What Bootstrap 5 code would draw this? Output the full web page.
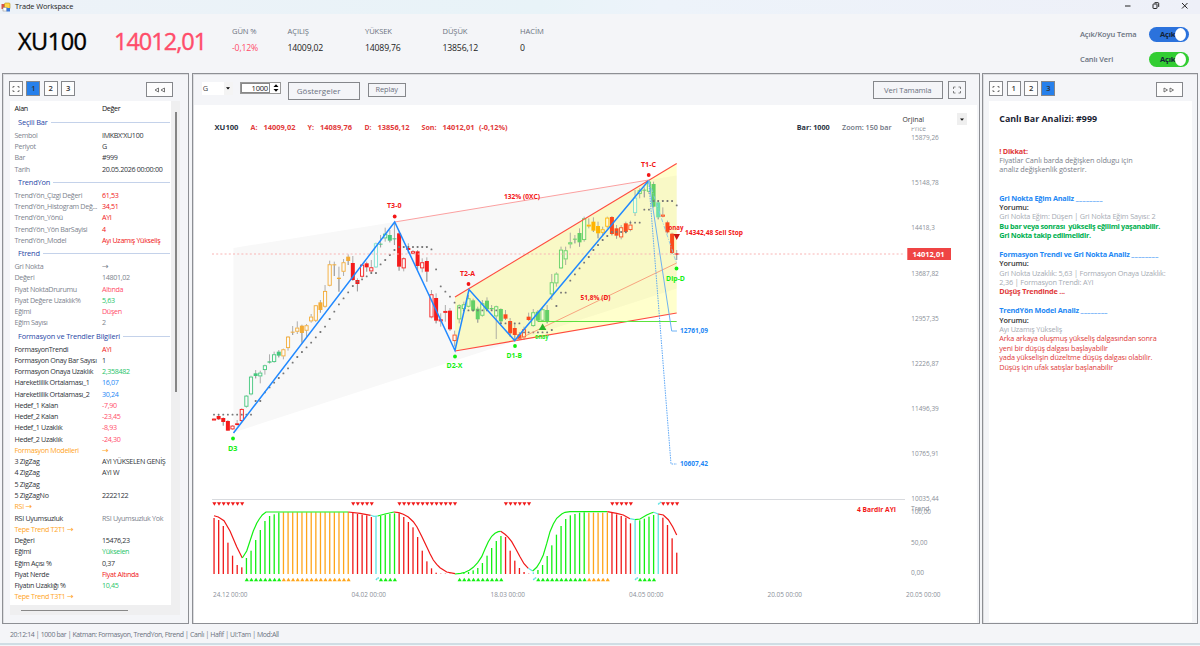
<!DOCTYPE html>
<html lang="tr">
<head>
<meta charset="utf-8">
<title>Trade Workspace</title>
<link rel="stylesheet" href="https://cdn.jsdelivr.net/npm/bootstrap@5.3.0/dist/css/bootstrap.min.css">
<style>
:root{--seg:"Open Sans","Noto Sans",sans-serif}
body{width:1200px;height:646px;overflow:hidden;background:#f4f5f8;font-family:var(--seg);font-size:7.4px;line-height:1;color:#222}
.titlebar{height:14px;background:linear-gradient(90deg,#edf2f8,#e8f3f8 45%,#edf3fa 55%,#eef0f8);padding-left:1px;color:#222;letter-spacing:-.1px}
.topbar{height:59px}
.sym{font-size:23.5px;font-weight:500;letter-spacing:-.5px;color:#000;margin-left:18px;width:96px;line-height:28px;padding-top:13px;-webkit-text-stroke:.4px}
.px{font-size:23.5px;font-weight:500;letter-spacing:-1px;color:#ff4d6a;width:118px;line-height:28px;padding-top:13px;-webkit-text-stroke:.4px}
.stat{padding-top:12px}
.stat b,.stat i{display:block;font-weight:400;font-style:normal;white-space:nowrap}
.stat b{color:#6b7280;font-size:7.6px;line-height:10px;letter-spacing:-.1px}
.stat i{font-size:8.7px;line-height:12px;margin-top:6px;letter-spacing:-.18px}
.tog{width:40px;height:15px;border-radius:8px;padding:0 1px 0 11px;font-weight:700;font-size:7.5px;color:#132238;letter-spacing:-.2px}
.tog span{width:11px;height:13px;border-radius:50%;background:#fff;margin-left:0;flex:none}
.blue{background:#2b72dc}.green{background:#32cd32}
.toglabel{width:69px;font-weight:600;color:#6a7280;font-size:7.5px;letter-spacing:-.12px}
.pane{border:1px solid #8d8f94;box-shadow:inset 1px 1px 0 #dcdde0;height:551px;background:#f4f5f8}
.sq{width:14px;height:15px;border:1px solid #85878b;background:#fdfdfd;color:#333;font-size:7.6px;font-weight:600}
.sq.on{background:#2680eb}
.arr{width:27px;height:15px;border:1px solid #85878b;background:#fdfdfd}
.btnx{border:1px solid #85878b;background:#f4f5f8;color:#6b7280}
.lst{width:161px;height:504px;background:#fff;overflow:hidden}
.lst .rw{height:11.27px;line-height:11.27px;padding-left:4.5px;white-space:nowrap;letter-spacing:-.32px;font-size:7.15px}
.lst .rw span:first-child{width:87.5px;flex:none}
.lst .hd{height:14px;line-height:15px;color:#111}
.lst .gp{height:14.9px;line-height:15px;font-size:7.4px;font-weight:500;padding-left:8px;color:#2746a6;white-space:nowrap;letter-spacing:-.15px}
.gp::after{content:"";flex:1;height:1px;background:#c4d2ea;margin:0 1px 0 3px;align-self:center}
.rw em{font:400 8px/11px "DejaVu Sans",sans-serif}
.g{color:#7d838e}.k{color:#30343a}.r{color:#f01515}.p{color:#ff4d6a}.n{color:#1fc46a}.b{color:#1e88f5}.o{color:#ffa51e}
.ana{background:#fff;width:203px;height:521px;padding:13px 0 0 10px;white-space:pre;line-height:9.4px;font-size:7.3px;letter-spacing:-.08px}
.ana h1{font-size:8.9px;font-weight:700;line-height:10px;margin:0 0 22.6px;color:#1b2433;letter-spacing:0}
.ana div{height:9.4px}
.ana .hb{color:#1e88f5;font-weight:700;letter-spacing:-.2px}.ana .gb{color:#00b050;font-weight:700;letter-spacing:-.29px}.ana .rb{color:#e03a3a;font-weight:700;letter-spacing:-.2px}
.ana .hb u{text-decoration:none;letter-spacing:.4px}
.ana .lg{color:#a6abb3;letter-spacing:-.16px}.ana .rd{color:#e03a3a;letter-spacing:-.14px}.ana .yo{color:#333;font-weight:600;letter-spacing:-.1px}.ana .dk{color:#7b818b}
.status{height:21px;padding:4px 0 0 10px;color:#6b7280;font-size:6.9px;letter-spacing:-.36px;border-bottom:2px solid #cfdde4}
svg text{font-family:var(--seg)}
</style>
</head>
<body>
<div class="titlebar d-flex align-items-center">
  <svg width="10" height="10" viewBox="0 0 10 10"><rect x=".5" y="2" width="5" height="5" fill="#d9534a"/><rect x="3.5" y="1" width="5.5" height="6" rx="1" fill="#ffd54a" stroke="#b9901c" stroke-width=".6"/><rect x="2" y="5.5" width="4" height="3.5" fill="#fff" stroke="#888" stroke-width=".5"/><rect x="5.5" y="6" width="3.5" height="3.5" fill="#3b78d8"/></svg>
  <span style="margin-left:4px">Trade Workspace</span>
  <svg class="ms-auto" width="80" height="14" viewBox="1120 0 80 14" fill="none" stroke="#222" stroke-width="1"><path d="M1125 6h5.500M1182 3l5.500 5.500m0-5.500l-5.500 5.500"/><rect x="1153" y="4" width="4" height="4.500" rx=".5"/><path d="M1154.500 3.200q0-.5.5-.5h3q.7 0 .7.7v3.500"/></svg>
</div>
<header class="topbar d-flex">
  <div class="sym">XU100</div>
  <div class="px-price px">14012,01</div>
  <div class="d-flex stat">
    <div style="width:55.500px"><b>GÜN %</b><i style="color:#ff4d6a">-0,12%</i></div>
    <div style="width:77.500px"><b>AÇILIŞ</b><i>14009,02</i></div>
    <div style="width:77.500px"><b>YÜKSEK</b><i>14089,76</i></div>
    <div style="width:77.500px"><b>DÜŞÜK</b><i>13856,12</i></div>
    <div><b>HACİM</b><i>0</i></div>
  </div>
  <div class="ms-auto d-flex flex-column" style="padding:13px 11px 0 0;gap:10px">
    <div class="d-flex align-items-center"><span class="toglabel">Açık/Koyu Tema</span><div class="tog blue d-flex align-items-center">Açık<span></span></div></div>
    <div class="d-flex align-items-center"><span class="toglabel">Canlı Veri</span><div class="tog green d-flex align-items-center">Açık<span></span></div></div>
  </div>
</header>
<main class="d-flex" style="padding:0 2px;gap:2.500px">
  <section class="pane" style="width:187.500px;padding:7px 0 0 6px">
    <div class="d-flex" style="gap:3.400px;height:20px">
      <div class="sq d-flex align-items-center justify-content-center"><svg width="8" height="8" viewBox="0 0 8 8" fill="none" stroke="#555" stroke-width=".8"><path d="M1 3V1.500h1.500M5.500 1.500H7V3M1 5v1.500h1.500M5.500 6.500H7V5"/></svg></div>
      <div class="sq on d-flex align-items-center justify-content-center">1</div>
      <div class="sq d-flex align-items-center justify-content-center">2</div>
      <div class="sq d-flex align-items-center justify-content-center">3</div>
      <div class="arr d-flex align-items-center justify-content-center" style="margin-left:67.500px;margin-top:1px"><svg width="12" height="6" viewBox="0 0 12 6" fill="none" stroke="#555" stroke-width=".8"><path d="M4.500 1v4L1 3zM10.500 1v4L7 3z"/></svg></div>
    </div>
    <div class="d-flex" style="background:#efeff0;width:170px;height:514px;margin-left:1px">
      <div style="width:161px">
        <div class="lst" id="lst"></div>
        <div style="margin:4.500px 0 0 10.500px;width:107px;height:1.500px;background:#888"></div>
      </div>
      <div style="margin:11px 0 0 4px;width:1.500px;height:280px;background:#858585"></div>
    </div>
  </section>
  <section class="pane" style="width:788px;padding:0 2px 0 1px">
    <div class="d-flex" style="height:31px;padding:7px 11px 0 8px">
      <div class="d-flex bg-white" style="width:31px;height:13px;margin-top:1px"><span class="flex-fill" style="padding:3px 0 0 1px;color:#444">G</span><span class="d-flex align-items-center justify-content-center" style="width:9px;background:#f4f4f4"><svg width="4" height="3"><path d="M0 .3h4L2 2.500z"/></svg></span></div>
      <div class="d-flex bg-white" style="width:41px;height:12px;border:1px solid #999;margin:1px 0 0 7px"><span class="flex-fill text-end" style="border:1px solid #888;padding:1px 1px 0 0;margin-right:2px;font-size:7.600px;line-height:7px;letter-spacing:-.3px">1000</span><svg width="8" height="10"><path d="M1.500 4L4 1.200 6.500 4zM1.500 6L4 8.800 6.500 6z"/></svg></div>
      <div class="btnx" style="width:72px;height:18px;margin:1px 0 0 7px;padding:4px 0 0 8px;font-size:8px">Göstergeler</div>
      <div class="btnx text-center" style="width:38px;height:14px;margin:2px 0 0 8px;padding-top:2px;font-size:7.400px;letter-spacing:-.1px">Replay</div>
      <div class="btnx text-center" style="width:70px;height:18px;margin:0 0 0 auto;padding-top:5px;font-size:7.700px;letter-spacing:-.15px">Veri Tamamla</div>
      <div class="btnx d-flex align-items-center justify-content-center" style="width:18px;height:18px;margin-left:5px"><svg width="8" height="8" viewBox="0 0 8 8" fill="none" stroke="#666" stroke-width=".8"><path d="M.5 3V1H2.500M5.500 1H7.500V3M.5 5v2H2.500M5.500 7H7.500V5"/></svg></div>
    </div>
    <svg id="chart" class="d-block bg-white" width="783" height="518" viewBox="194 105 783 518"></svg>
  </section>
  <section class="pane" style="width:216px;padding:7px 0 0 6px">
    <div class="d-flex" style="gap:3.400px;height:20px">
      <div class="sq d-flex align-items-center justify-content-center"><svg width="8" height="8" viewBox="0 0 8 8" fill="none" stroke="#555" stroke-width=".8"><path d="M1 3V1.500h1.500M5.500 1.500H7V3M1 5v1.500h1.500M5.500 6.500H7V5"/></svg></div>
      <div class="sq d-flex align-items-center justify-content-center">1</div>
      <div class="sq d-flex align-items-center justify-content-center">2</div>
      <div class="sq on d-flex align-items-center justify-content-center">3</div>
      <div class="arr d-flex align-items-center justify-content-center" style="margin-left:97px;margin-top:1px"><svg width="12" height="6" viewBox="0 0 12 6" fill="none" stroke="#555" stroke-width=".8"><path d="M1 1v4l3.500-2zM7 1v4l3.500-2z"/></svg></div>
    </div>
    <div class="ana"><h1>Canlı Bar Analizi: #999</h1><div class="rb">! Dikkat:</div><div class="dk">Fiyatlar Canlı barda değişken oldugu için</div><div class="dk">analiz değişkenlik gösterir.</div><div></div><div></div><div class="hb">Gri Nokta Eğim Analiz <u>________</u></div><div class="yo">Yorumu:</div><div class="lg">Gri Nokta Eğim: Düşen | Gri Nokta Eğim Sayısı: 2</div><div class="gb">Bu bar veya sonrası  yükseliş eğilimi yaşanabilir.</div><div class="gb">Gri Nokta takip edilmelidir.</div><div></div><div class="hb">Formasyon Trendi ve Gri Nokta Analiz <u>________</u></div><div class="yo">Yorumu:</div><div class="lg">Gri Nokta Uzaklık: 5,63 | Formasyon Onaya Uzaklık:</div><div class="lg">2,36 | Formasyon Trendi: AYI</div><div class="rb">Düşüş Trendinde ...</div><div></div><div class="hb">TrendYön Model Analiz <u>________</u></div><div class="yo">Yorumu:</div><div class="lg">Ayı Uzamış Yükseliş</div><div class="rd">Arka arkaya oluşmuş yükseliş dalgasından sonra</div><div class="rd">yeni bir düşüş dalgası başlayabilir</div><div class="rd">yada yükselişin düzeltme düşüş dalgası olabilir.</div><div class="rd">Düşüş için ufak satışlar başlanabilir</div></div>
  </section>
</main>
<footer class="status d-flex align-items-center">20:12:14 | 1000 bar | Katman: Formasyon, TrendYon, Ftrend | Canlı | Hafif | UI:Tam | Mod:All</footer>
<script>
// Property list: "#" starts a group, otherwise name|name colour|value|value colour
const rows=`#Seçili Bar
Sembol|g|IMKBX'XU100|k
Periyot|g|G|k
Bar|g|#999|k
Tarih|g|20.05.2026 00:00:00|k
#TrendYon
TrendYön_Çizgi Değeri|g|61,53|r
TrendYön_Histogram Değ...|g|34,51|r
TrendYön_Yönü|g|AYI|r
TrendYön_Yön BarSayisi|g|4|r
TrendYön_Model|g|Ayı Uzamış Yükseliş|r
#Ftrend
Gri Nokta|g|→|g
Değeri|g|14801,02|g
Fiyat NoktaDrurumu|g|Altında|p
Fiyat Değere Uzaklık%|g|5,63|n
Eğimi|g|Düşen|p
Eğim Sayısı|g|2|g
#Formasyon ve Trendler Bilgileri
FormasyonTrendi|k|AYI|r
Formasyon Onay Bar Sayısı|k|1|k
Formasyon Onaya Uzaklık|k|2,358482|n
Hareketlilik Ortalaması_1|k|16,07|b
Hareketlilik Ortalaması_2|k|30,24|b
Hedef_1 Kalan|k|-7,90|p
Hedef_2 Kalan|k|-23,45|p
Hedef_1 Uzaklık|k|-8,93|p
Hedef_2 Uzaklık|k|-24,30|p
Formasyon Modelleri|o|→|o
3 ZigZag|k|AYI YÜKSELEN GENİŞ|k
4 ZigZag|k|AYI W|k
5 ZigZag|k||k
5 ZigZagNo|k|2222122|k
RSI →|o||k
RSI Uyumsuzluk|k|RSI Uyumsuzluk Yok|g
Tepe Trend T2T1 →|o||k
Değeri|k|15476,23|k
Eğimi|k|Yükselen|n
Eğim Açısı %|k|0,37|k
Fiyat Nerde|k|Fiyat Altında|r
Fiyatın Uzaklığı %|k|10,45|n
Tepe Trend T3T1 →|o||k`.split('\n');
document.getElementById('lst').innerHTML='<div class="rw hd d-flex"><span>Alan</span><span>Değer</span></div>'+rows.map(r=>{
  if(r[0]=='#')return `<div class="gp d-flex">${r.slice(1)}</div>`;
  const c=r.replace('→','<em>→</em>').split('|');return `<div class="rw d-flex"><span class="${c[1]}">${c[0]}</span><span class="${c[3]}">${c[2]}</span></div>`}).join('');

let s='';const X=i=>214+4.627*i;
const line=(p,c,w=1,x='')=>s+=`<polyline points="${p}" fill="none" stroke="${c}" stroke-width="${w}" ${x}/>`;
const txt=(x,y,t,w,c='#8a8f98',z=7,b=400)=>s+=`<text x="${x}" y="${y}" ${w?`textLength="${w}" lengthAdjust="spacingAndGlyphs"`:''} fill="${c}" font-size="${z}" font-weight="${b}">${t}</text>`;
// shaded regions
s+='<path d="M233.500 248L394.700 222 648.700 180 676.700 175.500V288.500L233.500 432.500z" fill="#f8f8f8"/>';
s+='<path d="M455 297L676.700 163.500V313L455 351z" fill="#ff0" fill-opacity=".2"/>';
// candles: index, wick top, wick bottom, body top, body bottom, colour, filled
const R='#f51b1b',G='#44c77d',O='#f3ab35',C='#7fe3d2',L='#62d066',T='#fb4a1c';
const candles=[[6,310,[
[0,324,330,326,329,R,0],[1,315,330,318,328,R,1],[2,322,347,324,336,R,1],[3,330,362,333,362,R,1],[4,345,360,347,358,R,0],[5,330,346,340,345,R,1],[6,295,338,297,333,R,0],[7,255,293,257,290,G,0],[8,197,256,200,253,G,0],[9,180,205,190,198,G,1],[10,182,220,188,199,G,0],[11,164,194,166,180,G,0],[12,133,160,154,158,G,1],[13,125,158,133,156,G,0],[14,120,142,125,137,G,1],[15,116,148,118,139,O,0],[16,78,122,80,114,O,0],[17,48,75,65,68,O,1],[18,34,72,53,65,O,0],[19,44,98,47,69,O,1],[20,42,80,46,62,O,0],[21,12,38,20,34,O,0],[22,-15,36,-14,32,O,0]]],
[5,150,[[23,450,488,457,480,O,1],[24,405,473,423,470,O,0],[25,332,409,343,407,O,0],[26,335,378,343,346,O,1],[27,350,425,383,387,O,1],[28,327,378,337,365,O,0],[29,313,345,320,333,O,1],[30,318,392,339,390,R,1],[31,385,424,390,402,R,1],[32,342,385,344,380,R,0],[33,335,365,340,352,R,1],[34,330,370,352,364,R,0],[35,278,354,280,352,C,0],[36,255,292,281,284,G,1],[37,233,275,251,265,G,0],[38,240,277,255,272,G,1],[39,215,285,265,268,G,1],[40,245,362,250,350,R,1],[41,322,364,325,355,R,0],[42,280,310,294,300,R,1],[43,300,313,304,311,R,0],[44,300,360,304,348,R,1],[45,325,367,337,355,R,0],[46,322,395,333,365,R,1]]],
[7,240,[[47,150,235,163,232,R,0],[48,160,250,174,242,R,1],[49,220,260,238,244,R,0],[50,195,245,213,217,R,0],[51,204,272,212,268,R,1],[52,272,320,284,303,T,0],[53,193,250,196,238,L,0],[54,185,212,193,207,L,0],[55,165,202,175,200,L,0],[56,176,214,181,212,L,1],[57,200,248,206,238,L,1],[58,180,230,190,227,L,0],[59,172,210,182,208,L,1],[60,195,212,204,208,L,1],[61,197,297,199,229,L,0],[62,205,252,207,244,L,1],[63,210,240,223,236,T,1],[64,234,290,243,280,T,1],[65,252,300,264,285,T,1],[66,276,300,283,298,T,1],[67,260,300,268,292,T,0],[68,218,242,230,240,T,1],[69,207,260,217,258,L,0],[70,210,245,215,242,L,1],[71,202,244,208,242,L,0],[72,195,250,210,244,L,1],[73,102,180,127,163,L,0],[74,97,140,101,130,L,0],[75,20,87,29,85,L,0],[76,20,75,31,58,L,0]]],
[8,110,[[77,368,415,397,403,L,0],[78,375,400,386,389,L,1],[79,355,410,369,397,L,1],[80,320,395,325,390,L,0],[81,325,355,344,348,'#ffb400',0],[82,322,366,335,362,'#ffb400',1],[83,335,385,348,370,'#ffb400',1],[84,350,376,358,368,'#ffb400',0],[85,320,355,323,350,'#ffb400',0],[86,318,376,321,372,T,1],[87,345,386,355,377,T,1],[88,345,388,352,382,T,0],[89,335,370,340,366,T,1],[90,332,364,344,360,T,0],[91,240,318,263,309,C,0],[92,235,265,241,252,L,0],[93,232,262,239,242,L,1],[94,212,252,215,245,L,0],[95,215,292,222,290,L,1],[96,275,328,277,322,'#6ee0a8',1],[97,292,322,314,320,T,0],[98,332,370,337,367,T,1],[99,368,432,371,429,T,1],[100,420,450,430,434,R,1]]]];
for(const [,y0,a] of candles)for(const [i,a1,a2,b1,b2,c,f] of a){const x=X(i),Y=v=>(y0+v/3);
  s+=`<path d="M${x} ${Y(a1)}V${Y(f?a2:b1)}M${x} ${Y(b2)}V${Y(Math.max(a2,b2))}" stroke="#999" stroke-width=".8"/><rect x="${x-(f?2:1.600)}" y="${Y(b1)+(f?0:.4)}" width="${f?4:3.200}" height="${Math.max(1,(b2-b1)/3-(f?0:.8))}" ${f?`fill="${c}"`:`fill="#fff" fill-opacity=".35" stroke="${c}" stroke-width=".9"`}/>`}
// moving-stop dots
const d=[];const put=(i,y0,...v)=>v.forEach((q,k)=>d.push([i+k,y0+q/3]));
put(0,310,314,314,314,314,314,314,314,314,314,273,273,247,232,218,204,190,175,158,141,126,112,98,82,66,50);
put(25,150,507,485,463,445,427,408,395,388,379,369,369,343,330,315,300,291,291,291,291,291,291,291,298);
put(48,240,88,139,155,170,188,203,211,211,211,211,211,211,211,211,250,250,250,250,250,277,277,277,277,277,277,270,198,158,158,122,103,85,68,51,30,15);
put(84,110,390,378,366,366,366,366,338,338,338,299,299,273,273,273,273,273,286);
d.forEach(([i,y])=>s+=`<rect x="${X(i)-.9}" y="${y-.9}" width="1.800" height="1.800" rx=".5" fill="#777"/>`);
// reference levels and trend lines
line('212,254 905,254','#f9b4b4',1,'stroke-dasharray="2 2.200"');
line('394.7,222 648.7,180','#fba0a0');
line('455,297 676.7,163.5','#ff4b3e',1.1);line('455,351 676.7,313','#ff4b3e',1.1);
line('514.7,341 676.7,263','#f79a76',.9);line('538,321.5 676.7,321.5','#5be23c');
line('233.5,433 394.7,222 455,350.5 469,289.5 514.7,340.5 648.7,180.500','#2189ff',1.5);
line('648.7,180.500 671.7,331 677,331','#5fa9f4',.9);line('648.7,180.500 671,464 677,464','#4a9df5',.9,'stroke-dasharray="1.500 1"');line('648.7,180.500 676.5,263','#86c5ea',.9,'stroke-dasharray="4 1.500 1 1.500"');
const rd='#f31616',gn='#12ef12';
[[394.7,216.5],[468.5,284],[648.7,175]].forEach(p=>s+=`<circle cx="${p[0]}" cy="${p[1]}" r="1.900" fill="${rd}"/>`);
[[233,438.500],[455,356.500],[515,346],[676.500,268.500]].forEach(p=>s+=`<circle cx="${p[0]}" cy="${p[1]}" r="1.900" fill="${gn}"/>`);
s+='<path d="M538.800 330L542.600 323.500 546.400 330z" fill="#28b428"/><path d="M673.500 234H680L676.700 240z" fill="#c81414"/>';
txt(387,208.200,'T3-0',14.5,rd,7,700);txt(460,275.800,'T2-A',15,rd,7,700);txt(641,167,'T1-C',15,rd,7,700);
txt(228,450.500,'D3',9.500,gn,7,700);txt(446.500,368,'D2-X',16,gn,7,700);txt(506.500,357.600,'D1-B',15.500,gn,7,700);txt(666,280.700,'Dip-D',19,gn,7,700);
txt(535,339.300,'onay',13.500,gn,6.4,700);txt(668.5,230,'onay',15,rd,6.4,700);txt(504,199.300,'132% (0XC)',36,rd,6.6,700);txt(580.5,300.300,'51,8% (D)',30,rd,6.6,700);
txt(685,235.300,'14342,48 Sell Stop',58,rd,7,700);txt(680,333.300,'12761,09',28,'#1e88f5',6.9,700);txt(680,466.300,'10607,42',28,'#1e88f5',6.9,700);
// quote line
txt(214.500,130,'XU100',24,'#2a3342',7.2,700);txt(250.500,130,'A:',7,'#e23b3b',7.1,700);txt(263.500,130,'14009,02',32,'#e23b3b',7.1,700);txt(307.500,130,'Y:',6.500,'#e23b3b',7.1,700);txt(320,130,'14089,76',32,'#e23b3b',7.1,700);txt(364.500,130,'D:',7,'#e23b3b',7.1,700);txt(377.500,130,'13856,12',32,'#e23b3b',7.1,700);txt(421.500,130,'Son:',15,'#e23b3b',7.1,700);txt(442.500,130,'14012,01',32,'#e23b3b',7.1,700);txt(479,130,'(-0,12%)',28.500,'#e23b3b',7.1,700);
txt(796.700,130,'Bar: 1000',33,'#2a3342',7,700);txt(842,130,'Zoom: 150 bar',49.500,'#6b7280',7,600);
// price axis
txt(911,131,'Price',15);s+='<rect x="900" y="112" width="62" height="15.500" fill="#fff"/><rect x="957" y="113" width="10" height="12" fill="#efefef"/><path d="M960 118.500h4l-2 2.200z" fill="#111"/>';
txt(902.500,121.500,'Orjinal',21.500,'#333',7.2);
['15879,26','15148,78','14418,3','13687,82','12957,35','12226,87','11496,39','10765,91','10035,44'].forEach((t,i)=>txt(911.300,140.200+i*45.1,t,t.length==7?23.500:27.500));
s+='<rect x="907.300" y="248" width="43.700" height="12" fill="#ef4444"/>';txt(912.500,256.600,'14012,01',32,'#fff',7.2,700);
// trend oscillator
line('212,499.500 905,499.500','#d8dade');
txt(857,512,'4 Bardir AYI',39,rd,7,700);txt(911,511,'Trend',18.500);txt(911,514.300,'100,00',20);txt(911,545,'50,00',16.500);txt(911,575,'0,00',13);
const H=[99,105,123,173,212,240,247,219,197,165,135,108,93,88,83,...Array(15).fill(82),82,87,89,91,96,93,93,89,87,85,85,96,111,127,156,197,229,250,263,266,266,266,266,265,264,261,256,249,234,212,189,168,153,156,197,227,249,261,266,262,255,240,213,181,149,123,102,91,87,83,82,83,83,83,83,83,82,88,93,98,115,106,106,101,95,90,86,98,120,160,203];
const seg=[[7,'#f01818'],[15,'#12f012'],[30,'#ffa51a'],[35,'#f01818'],[36,'#5fe3e3'],[40,'#12f012'],[53,'#f01818'],[63,'#12f012'],[69,'#f01818'],[70,'#5fe3e3'],[81,'#12f012'],[86,'#ffa51a'],[91,'#f01818'],[92,'#5fe3e3'],[96,'#12f012'],[97,'#5fe3e3'],[101,'#f01818']];
H.forEach((v,i)=>{const c=seg.find(q=>i<q[0])[1],x=X(i),y=485+v/3;
  s+=`<rect x="${x-.6}" y="${y}" width="1.300" height="${574-y}" fill="${c}"/>`;
  if(c=='#f01818')s+=`<path d="M${x-1.700} 502.300h4.200l-2.100 3.500z" fill="${c}"/>`;
  else if(c=='#5fe3e3'){const ty=i==96?502.500:578;s+=`<path d="M${x} ${ty+2}l1.300-1.500M${x+1.500} ${ty}h1.500" stroke="${c}" stroke-width="1.400"/>`}
  else s+=`<path d="M${x-1.700} 581.300h4.200l-2.100-3.500z" fill="${c}"/>`});
const cv=(x0,c,p)=>line(p.map(([a,b])=>(x0+a/3).toFixed(1)+','+(485+b/3).toFixed(1)).join(' '),c,1.2);
cv(200,'#f01818',[[42,92],[55,96],[72,107],[90,138],[110,185],[127,219]]);
cv(200,'#12f012',[[127,219],[140,198],[150,168],[160,138],[170,115],[178,102],[187,90],[198,81],[445,81]]);
cv(200,'#f01818',[[445,81],[480,85],[512,91]]);cv(200,'#5fe3e3',[[512,91],[522,94],[533,93]]);cv(200,'#12f012',[[533,93],[555,87],[582,81]]);
cv(200,'#f01818',[[582,81],[596,83],[610,88],[625,96],[640,110],[651,126],[665,154],[680,185],[690,206],[700,225],[710,238],[720,248],[740,261],[765,266]]);
cv(450,'#12f012',[[15,267],[32,265],[45,262],[58,256],[70,247],[83,233],[95,215],[105,192],[115,170],[125,154],[135,145],[145,140],[152,139]]);
cv(450,'#f01818',[[152,139],[165,148],[175,157],[185,170],[197,191],[210,215],[222,236],[235,250]]);cv(450,'#5fe3e3',[[235,250],[248,258]]);
cv(450,'#12f012',[[248,258],[260,247],[270,231],[280,210],[290,176],[300,140],[310,117],[320,100],[335,87],[345,82],[360,80],[472,80]]);
cv(450,'#f01818',[[472,80],[500,85],[520,90],[540,101]]);cv(450,'#5fe3e3',[[540,101],[555,104]]);cv(450,'#12f012',[[555,104],[570,102],[590,90],[602,85],[611,82]]);cv(450,'#5fe3e3',[[611,82],[625,87]]);
cv(450,'#f01818',[[625,87],[640,90],[655,104],[668,125],[680,150]]);
[[213,'24.12 00:00'],[351.500,'04.02 00:00'],[490.500,'18.03 00:00'],[629,'04.05 00:00'],[767.500,'20.05 00:00'],[906,'20.05 00:00']].forEach(a=>txt(a[0],596.500,a[1],34.500));
document.getElementById('chart').innerHTML=s;
</script>
<script src="https://cdn.jsdelivr.net/npm/bootstrap@5.3.0/dist/js/bootstrap.bundle.min.js"></script>
</body>
</html>
